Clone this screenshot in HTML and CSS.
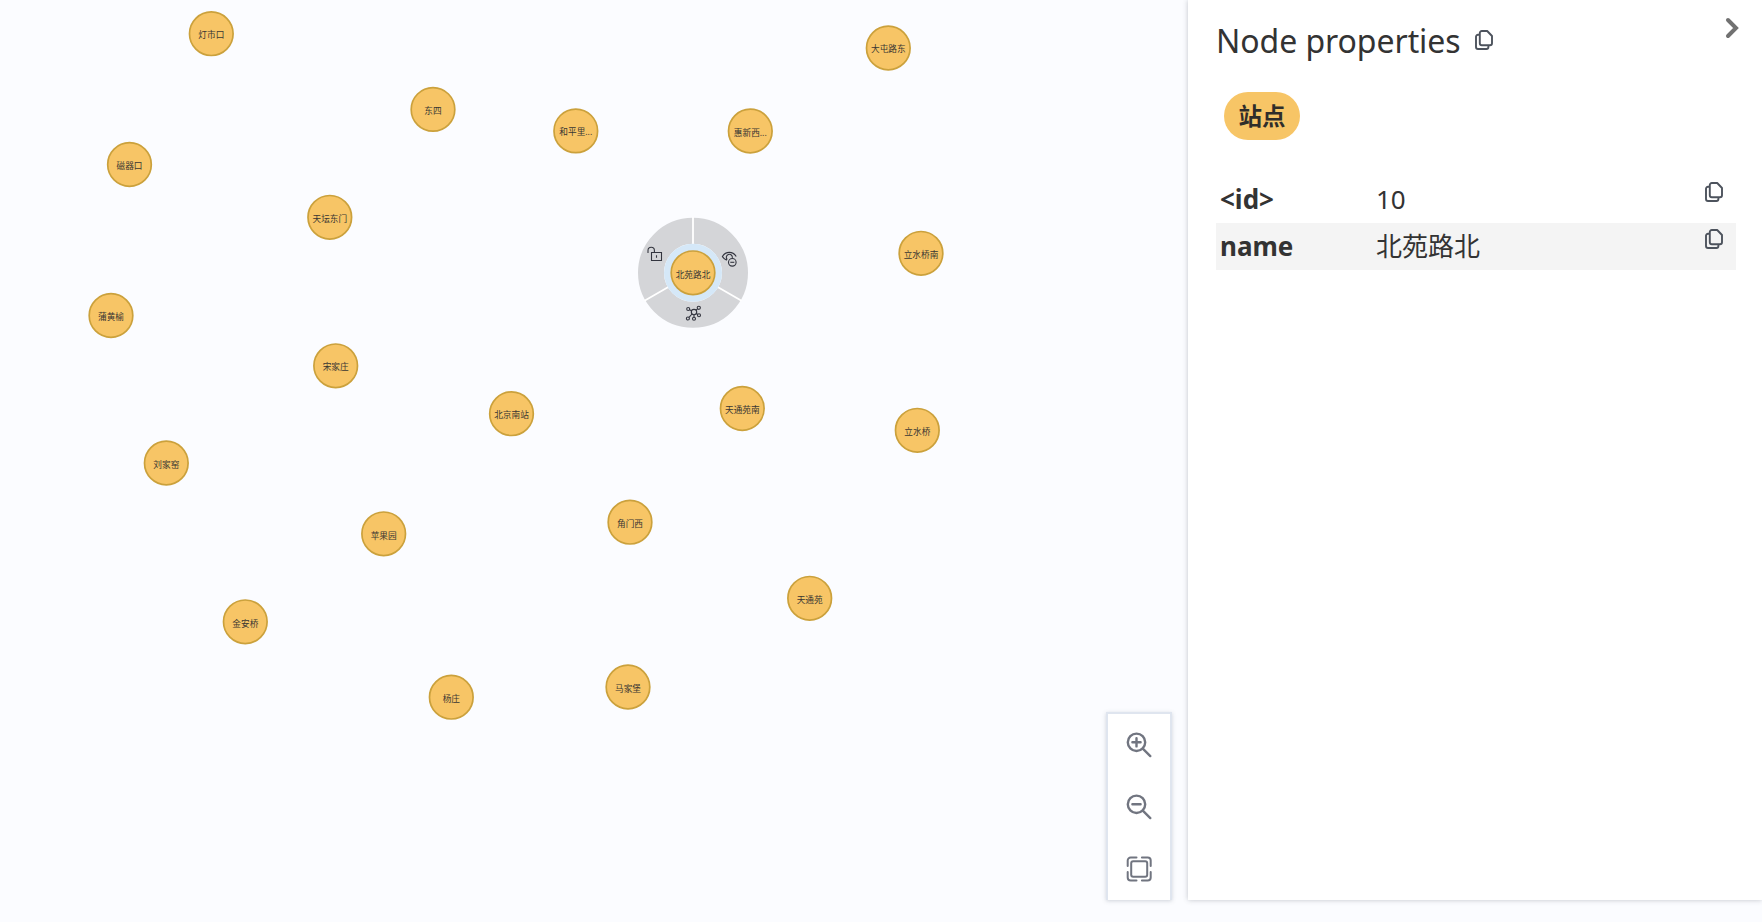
FILE: index.html
```html
<!DOCTYPE html>
<html lang="zh-CN">
<head>
<meta charset="utf-8">
<title>Graph</title>
<link rel="stylesheet" href="styles.css">
</head>
<body>
<svg class="defs" width="0" height="0" aria-hidden="true">
  <symbol id="copy" viewBox="0 0 18 20">
    <path d="M4.8 3.8V13.2a2 2 0 0 0 2 2H15a2 2 0 0 0 2-2V6L12.200 1H6.8a2 2 0 0 0-2 2ZM4.6 4.8H3a2 2 0 0 0-2 2V17a2 2 0 0 0 2 2H11.400a2 2 0 0 0 2-2V15.400"/>
  </symbol>
</svg>
<main class="app">
  <section class="canvas">
    <svg class="graph" width="1188" height="922" viewBox="0 0 1188 922">
      <g class="menu" transform="translate(693 272.8)">
        <circle class="menu-ring" r="42"/>
        <path class="menu-gap" d="M0 -28V-56M24.2 14L48.5 28M-24.2 14L-48.5 28"/>
        <circle class="halo" r="29"/>
        <g class="menu-icon">
          <path d="M-45 -19.8v-2.6a3.2 3.2 0 0 1 6.4 0v2.2M-41.5 -20.3h10v8h-10zM-36.5 -17.6v2.6"/>
          <path d="M33.800 -12.600C31.800 -13.500 30.300 -14.800 29.400 -16.200C31 -19 33.500 -20.400 36.300 -20.400S41.600 -19 43.200 -16.200M34.300 -13.300a3 3 0 1 1 5 -1.700"/>
          <circle cx="39.3" cy="-10.500" r="3.800"/><path d="M37.300 -10.500h4"/>
          <circle cx="1" cy="39.300" r="2.700"/><circle cx="-4.800" cy="36.200" r="1.500"/><circle cx="5.800" cy="35" r="1.600"/><circle cx="-5.100" cy="45.700" r="1.500"/><circle cx="1" cy="45.900" r="1.500"/><circle cx="6" cy="42.500" r="1.500"/>
          <path d="M-3.500 36.900L-1.400 38M2.900 37.400L4.600 36M-1 41.200L-4 44.600M1 42v2.400M3.300 40.700l1.500 1"/>
        </g>
      </g>
      <g class="node" transform="translate(211.3 33.7)"><circle r="21.8"/><text y="4.700">灯市口</text></g>
      <g class="node" transform="translate(888.3 48)"><circle r="21.8"/><text y="4.200">大屯路东</text></g>
      <g class="node" transform="translate(433 109.4)"><circle r="21.8"/><text y="4.700">东四</text></g>
      <g class="node" transform="translate(575.8 130.9)"><circle r="21.8"/><text y="4.500">和平里...</text></g>
      <g class="node" transform="translate(750.3 131)"><circle r="21.8"/><text y="4.500">惠新西...</text></g>
      <g class="node" transform="translate(129.5 164.5)"><circle r="21.8"/><text y="4.700">磁器口</text></g>
      <g class="node" transform="translate(329.8 217.3)"><circle r="21.8"/><text y="4.700">天坛东门</text></g>
      <g class="node" transform="translate(921 253.3)"><circle r="21.8"/><text y="4.700">立水桥南</text></g>
      <g class="node" transform="translate(693 272.8)"><circle r="21.8"/><text y="4.700">北苑路北</text></g>
      <g class="node" transform="translate(111 315.5)"><circle r="21.8"/><text y="4.700">蒲黄榆</text></g>
      <g class="node" transform="translate(335.7 365.8)"><circle r="21.8"/><text y="4.500">宋家庄</text></g>
      <g class="node" transform="translate(511.5 413.7)"><circle r="21.8"/><text y="4.700">北京南站</text></g>
      <g class="node" transform="translate(742.3 408.5)"><circle r="21.8"/><text y="4.700">天通苑南</text></g>
      <g class="node" transform="translate(917.3 430.3)"><circle r="21.8"/><text y="4.700">立水桥</text></g>
      <g class="node" transform="translate(166.3 463)"><circle r="21.8"/><text y="4.500">刘家窑</text></g>
      <g class="node" transform="translate(383.7 533.8)"><circle r="21.8"/><text y="4.700">苹果园</text></g>
      <g class="node" transform="translate(630 522.2)"><circle r="21.8"/><text y="4.700">角门西</text></g>
      <g class="node" transform="translate(809.7 598.3)"><circle r="21.8"/><text y="4.700">天通苑</text></g>
      <g class="node" transform="translate(245.3 621.8)"><circle r="21.8"/><text y="4.700">金安桥</text></g>
      <g class="node" transform="translate(451.3 697.2)"><circle r="21.8"/><text y="4.700">杨庄</text></g>
      <g class="node" transform="translate(628 687)"><circle r="21.8"/><text y="4.500">马家堡</text></g>
    </svg>
    <div class="zoom-controls">
      <svg class="zoom-icon" viewBox="0 0 26 26"><circle cx="10.500" cy="10.300" r="8.700"/><path d="M16.800 16.600L24.300 24.100M10.500 6.200v8.200M6.400 10.300h8.200"/></svg>
      <svg class="zoom-icon" viewBox="0 0 26 26"><circle cx="10.500" cy="10.300" r="8.700"/><path d="M16.800 16.600L24.300 24.100M6.400 10.300h8.200"/></svg>
      <svg class="zoom-icon fit" viewBox="0 0 26 26"><rect x="5.200" y="5.200" width="16" height="15.600" rx="2"/><path d="M1.700 10V4.500a3 3 0 0 1 3-3H10.500M15.900 1.500H21.700a3 3 0 0 1 3 3V10M24.700 16V21.500a3 3 0 0 1-3 3H15.900M10.500 24.500H4.700a3 3 0 0 1-3-3V16"/></svg>
    </div>
  </section>
  <aside class="panel">
    <header class="panel-head">
      <h1 class="title">Node properties</h1>
      <svg class="copy title-copy"><use href="#copy"/></svg>
      <svg class="chevron" viewBox="0 0 14 22"><path d="M3 3l8 8-8 8"/></svg>
    </header>
    <span class="label">站点</span>
    <div class="props">
      <div class="row"><span class="key">&lt;id&gt;</span><span class="value">10</span><svg class="copy"><use href="#copy"/></svg></div>
      <div class="row shaded"><span class="key">name</span><span class="value">北苑路北</span><svg class="copy"><use href="#copy"/></svg></div>
    </div>
  </aside>
</main>
</body>
</html>
```
FILE: styles.css
```css
* { box-sizing: border-box; }
body {
  margin: 0;
  background: #fbfcff;
  color: #333;
  font-family: "Noto Sans", "Noto Sans CJK SC", sans-serif;
}
.defs { position: absolute; }
.app { display: flex; height: 922px; overflow: hidden; }
.canvas { position: relative; flex: 0 0 1188px; }
.graph { display: block; }
.node circle { fill: #f7c566; stroke: #cba13c; stroke-width: 1.7; }
.node text {
  font: 8.67px "Noto Sans", "Noto Sans CJK SC", sans-serif;
  fill: #3a3733;
  text-anchor: middle;
}
.menu-ring { fill: none; stroke: #d4d5d8; stroke-width: 26; }
.menu-gap { stroke: #fff; stroke-width: 1.8; }
.halo { fill: #d5e8f8; }
.menu-icon { fill: none; stroke: #33353f; stroke-width: 1.1; }
.zoom-controls {
  position: absolute;
  left: 1106px;
  top: 712px;
  width: 66px;
  height: 188px;
  padding-top: 18px;
  border: 2px solid #dfe5ef;
  border-bottom: 0;
  background: #fff;
  box-shadow: 0 1px 4px rgba(80, 90, 110, .25);
  display: flex;
  flex-direction: column;
  align-items: center;
  gap: 36px;
}
.zoom-icon {
  width: 26px;
  height: 26px;
  fill: none;
  stroke: #717580;
  stroke-width: 2.4;
  stroke-linecap: round;
}
.fit { stroke-width: 2; }
.panel {
  flex: 1;
  height: 900px;
  padding: 0 26px 0 28px;
  background: #fff;
  box-shadow: 0 0 5px rgba(60, 65, 80, .3);
}
.panel-head { display: flex; align-items: flex-start; height: 92px; }
.title { margin: 19px 0 0; font-size: 32px; line-height: 44px; font-weight: 400; letter-spacing: -.06px; white-space: nowrap; }
.copy {
  width: 18px;
  height: 20px;
  fill: none;
  stroke: #4d535d;
  stroke-width: 1.9;
  stroke-linejoin: round;
  stroke-linecap: round;
}
.title-copy { margin: 30px 0 0 14px; }
.chevron {
  width: 14px;
  height: 22px;
  margin: 17px -3px 0 auto;
  fill: none;
  stroke: #717171;
  stroke-width: 4;
  stroke-linecap: round;
}
.label {
  display: block;
  width: 76px;
  height: 48px;
  margin-left: 8px;
  border-radius: 24px;
  background: #f7c566;
  color: #2f2d2a;
  font-size: 23.5px;
  line-height: 48px;
  font-weight: 700;
  text-align: center;
}
.props { margin-top: 36px; font-size: 26px; }
.row { display: flex; height: 47px; padding: 0 13px 0 4px; line-height: 46px; }
.shaded { background: #f4f4f4; }
.key { width: 156px; font-weight: 700; }
.value { flex: 1; }
.row .copy { margin-top: 6px; }
```
